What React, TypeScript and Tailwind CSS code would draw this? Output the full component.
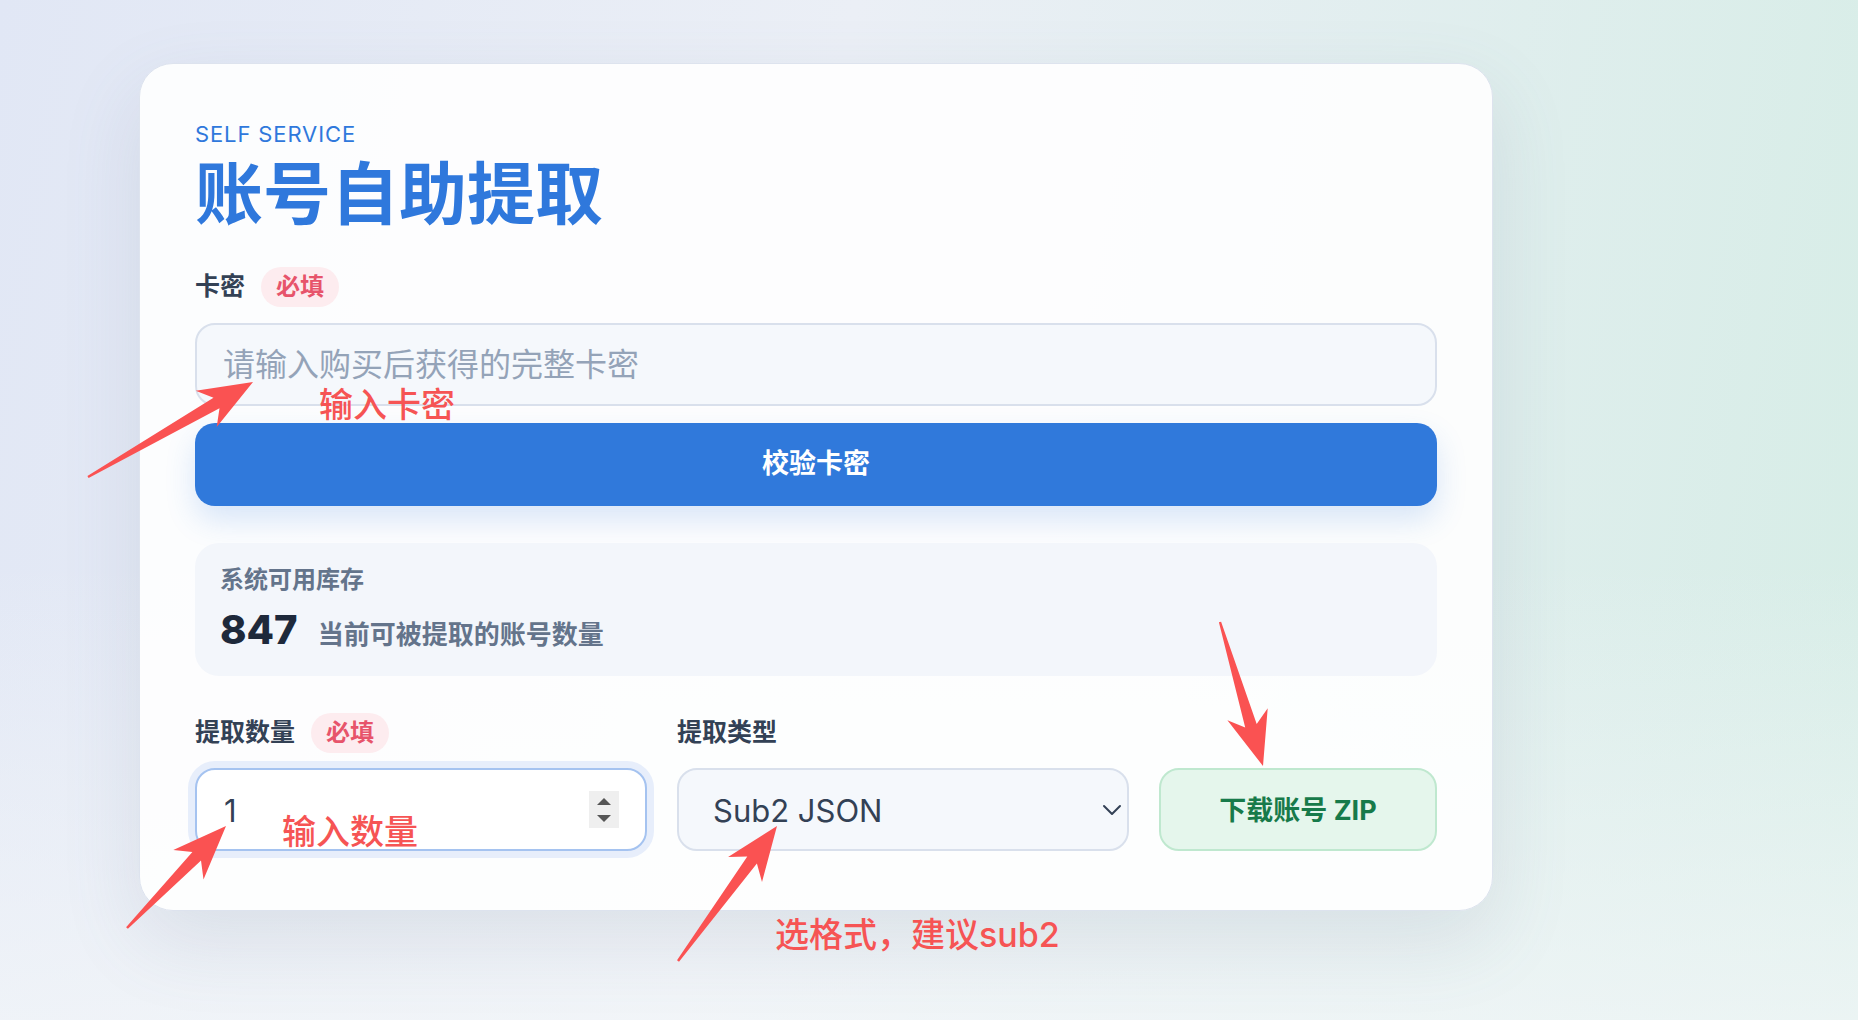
import React from 'react'

type Pt = [number, number]

// tapered callout arrow: thin tail, widening shaft, swept-back head
function arrowPoints(tail: Pt, tip: Pt, head = 54, half = 21, neck = 6) {
  const [x1, y1] = tail
  const [x2, y2] = tip
  const L = Math.hypot(x2 - x1, y2 - y1)
  const ux = (x2 - x1) / L
  const uy = (y2 - y1) / L
  const nx = -uy
  const ny = ux
  const p = (s: number, t: number) => `${(x1 + ux * s + nx * t).toFixed(1)},${(y1 + uy * s + ny * t).toFixed(1)}`
  return [
    p(0, -1.2),
    p(L - head * 0.78, -neck),
    p(L - head, -half),
    p(L, 0),
    p(L - head, half),
    p(L - head * 0.78, neck),
    p(0, 1.2),
  ].join(' ')
}

const arrows: { tail: Pt; tip: Pt }[] = [
  { tail: [88, 477], tip: [253, 382] },
  { tail: [127, 928], tip: [226, 826] },
  { tail: [678, 961], tip: [777, 826] },
  { tail: [1220, 622], tip: [1263, 766] },
]

function RequiredBadge() {
  return (
    <span className="inline-flex h-[40px] items-center rounded-full bg-[#fdecef] px-[15px] text-[24px] font-bold text-[#e7546b]">
      必填
    </span>
  )
}

export default function App() {
  return (
    <div className="relative min-h-screen w-full overflow-hidden bg-[linear-gradient(180deg,rgba(255,255,255,0)_55%,rgba(244,247,249,0.7)_100%),linear-gradient(100deg,#e1e7f5_0%,#ebeff6_42%,#d6ede6_100%)] pl-[139px] pt-[63px] font-['Inter','Noto_Sans_CJK_SC',sans-serif]">
      <div className="w-[1354px] rounded-[34px] border border-[#dde3ee] bg-white/90 px-[55px] pb-[59px] pt-[56px] shadow-[0_30px_80px_rgba(100,116,139,0.14)]">
        <p className="text-[22px] leading-[28px] tracking-[0.04em] text-[#2f78dc]">SELF SERVICE</p>
        <h1 className="mt-[12px] text-[68px] font-bold leading-[68px] text-[#2f78dc]">账号自助提取</h1>

        {/* card code */}
        <div className="mt-[39px] flex h-[40px] items-center gap-[16px]">
          <span className="text-[25px] font-bold text-[#334155]">卡密</span>
          <RequiredBadge />
        </div>
        <input
          readOnly
          placeholder="请输入购买后获得的完整卡密"
          className="mt-[16px] block h-[83px] w-full rounded-[20px] border-2 border-[#d9e0ec] bg-[#f5f8fc] px-[26px] text-[32px] text-[#334155] outline-none placeholder:text-[#94a3b8]"
        />
        <button className="mt-[17px] block h-[83px] w-full rounded-[20px] bg-[#3079db] text-[27px] font-bold text-white shadow-[0_14px_30px_rgba(48,121,219,0.18)]">
          校验卡密
        </button>

        {/* stock */}
        <div className="mt-[37px] h-[133px] rounded-[24px] bg-[#f3f6fb] px-[25px] pt-[21px]">
          <p className="text-[24px] font-semibold leading-[32px] text-[#64748b]">系统可用库存</p>
          <div className="mt-[10px] flex items-baseline gap-[20px] leading-[48px]">
            <span className="text-[40px] font-extrabold text-[#1e293b]">847</span>
            <span className="text-[26px] font-semibold text-[#64748b]">当前可被提取的账号数量</span>
          </div>
        </div>

        {/* extract options */}
        <div className="mt-[37px] grid grid-cols-[minmax(0,1fr)_minmax(0,1fr)_278px] gap-x-[30px]">
          <div>
            <div className="flex h-[40px] items-center gap-[16px]">
              <span className="text-[25px] font-bold text-[#334155]">提取数量</span>
              <RequiredBadge />
            </div>
            <div className="mt-[15px] flex h-[83px] items-center rounded-[20px] border-2 border-[#a5c3f0] bg-white pl-[27px] pr-[26px] shadow-[0_0_0_7px_#e7eefb]">
              <input readOnly value="1" size={1} className="w-full min-w-0 flex-1 bg-transparent pt-[3px] text-[31px] text-[#334155] outline-none" />
              <span className="flex h-[37px] w-[30px] shrink-0 flex-col items-center justify-center gap-[10px] bg-[#efefef]">
                <span className="h-0 w-0 border-x-[7px] border-b-[7px] border-x-transparent border-b-[#555]" />
                <span className="h-0 w-0 border-x-[7px] border-t-[7px] border-x-transparent border-t-[#555]" />
              </span>
            </div>
          </div>

          <div>
            <div className="flex h-[40px] items-center">
              <span className="text-[25px] font-bold text-[#334155]">提取类型</span>
            </div>
            <div className="mt-[15px] flex h-[83px] items-center justify-between rounded-[20px] border-2 border-[#d9e0ec] bg-[#f5f8fc] pl-[34px] pr-[5px]">
              <span className="pt-[3px] text-[31px] text-[#334155]">Sub2 JSON</span>
              <svg width="20" height="12" viewBox="0 0 20 12" fill="none">
                <path d="M2 2l8 8 8-8" stroke="#334155" strokeWidth="2" strokeLinecap="round" strokeLinejoin="round" />
              </svg>
            </div>
          </div>

          <div className="flex items-end">
            <button className="h-[83px] w-full rounded-[20px] border-2 border-[#bfe8cf] bg-[#e5f6ec] pt-[3px] text-[27px] font-bold text-[#177a4a]">
              下载账号 ZIP
            </button>
          </div>
        </div>
      </div>

      {/* red callouts */}
      <svg className="pointer-events-none absolute left-0 top-0" width="1858" height="1020">
        {arrows.map((a, i) => (
          <polygon key={i} points={arrowPoints(a.tail, a.tip)} fill="#fa5252" />
        ))}
      </svg>
      <span className="absolute left-[319px] top-[386px] text-[34px] font-medium leading-[38px] text-[#f65454]">输入卡密</span>
      <span className="absolute left-[282px] top-[813px] text-[34px] font-medium leading-[38px] text-[#f65454]">输入数量</span>
      <span className="absolute left-[775px] top-[916px] text-[34px] font-medium leading-[38px] text-[#f65454]">选格式，建议sub2</span>
    </div>
  )
}
